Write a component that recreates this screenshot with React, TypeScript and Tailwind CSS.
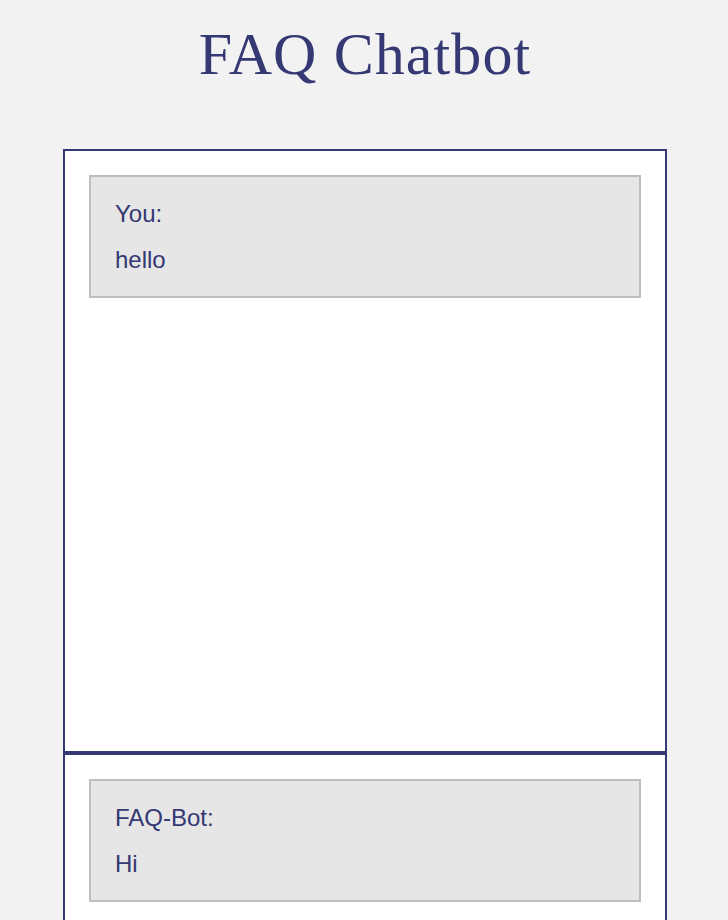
const navy = "text-[#343873]";

type Message = {
  author: string;
  text: string;
};

function Bubble({ message }: { message: Message }) {
  return (
    <div className="flex flex-col gap-[19px] border-2 border-[#bebebe] bg-[#e6e6e6] px-[24px] py-[23px]">
      <p className="leading-[27px]">{message.author}:</p>
      <p className="leading-[27px]">{message.text}</p>
    </div>
  );
}

export default function App() {
  const userMessage: Message = { author: "You", text: "hello" };
  const botMessage: Message = { author: "FAQ-Bot", text: "Hi" };

  return (
    <div className="min-h-[920px] bg-[#f2f2f2] pb-10">
      <h1
        className={`pt-[20px] pl-[2px] text-center text-[60px] leading-[69px] tracking-[1.1px] ${navy}`}
        style={{ fontFamily: '"Liberation Serif", "Times New Roman", serif' }}
      >
        FAQ Chatbot
      </h1>

      <div
        className={`mt-[60px] ml-[63px] w-[604px] text-[24px] ${navy}`}
        style={{ fontFamily: '"Liberation Sans", Arial, sans-serif' }}
      >
        <div className="h-[604px] border-2 border-[#343873] bg-white p-[24px]">
          <Bubble message={userMessage} />
        </div>
        <div className="border-2 border-[#343873] bg-white p-[24px]">
          <Bubble message={botMessage} />
        </div>
      </div>
    </div>
  );
}
